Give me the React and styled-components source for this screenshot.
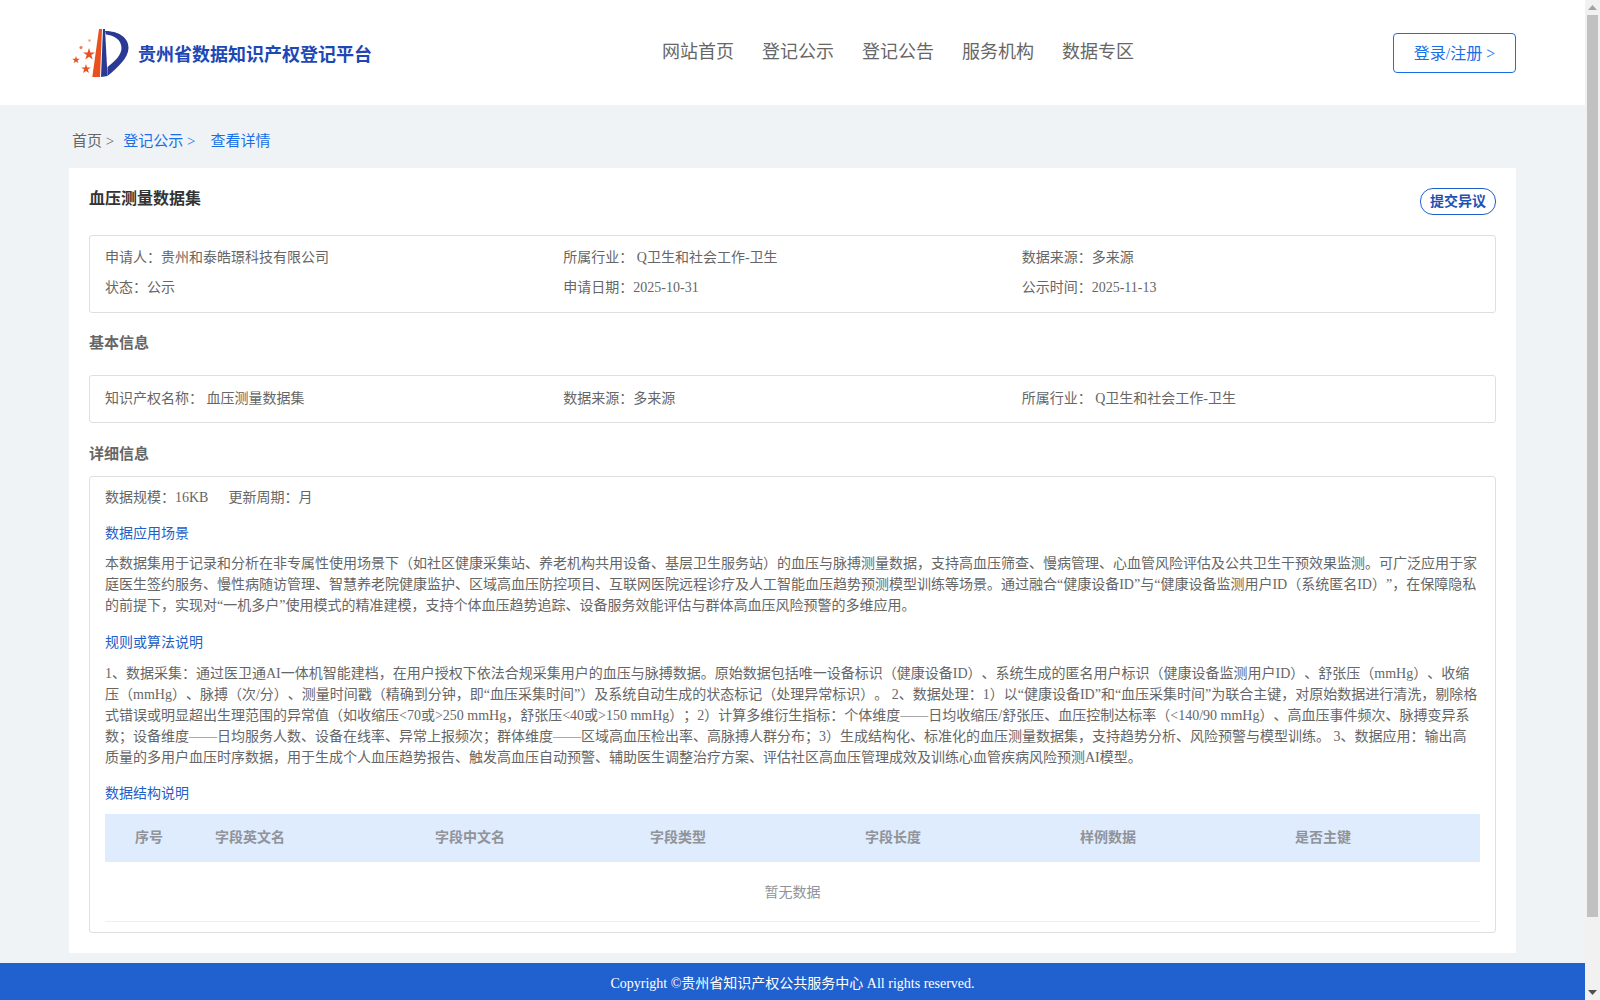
import React from "react";
import styled, { createGlobalStyle } from "styled-components";

const GlobalStyle = createGlobalStyle`
  html, body {
    margin: 0;
    padding: 0;
    height: 100%;
    overflow: hidden;
    background: #eff3f6;
    font-family: "Liberation Serif", "Noto Sans CJK SC", serif;
    font-size: 14px;
    color: #666;
    text-spacing-trim: space-all;
  }
  * { box-sizing: border-box; }
`;

// page shell + the browser scrollbar seen in the picture
const Shell = styled.div`
  display: flex;
  height: 1000px;
  overflow: hidden;
`;
const Page = styled.div`
  flex: 1;
  min-width: 0;
`;
const ScrollTrack = styled.div`
  width: 15px;
  display: flex;
  flex-direction: column;
  align-items: center;
  background: #f1f1f1;
`;
const ScrollArrow = styled.div`
  height: 15px;
  display: flex;
  align-items: center;
  justify-content: center;
  svg { display: block; }
`;
const ScrollThumb = styled.div`
  width: 11px;
  height: 902px;
  background: #c1c1c1;
`;
const ScrollRest = styled.div`
  flex: 1;
`;

// header
const Header = styled.header`
  height: 105px;
  background: #fff;
  display: grid;
  grid-template-columns: 592px auto 1fr;
  align-items: center;
  padding: 0 69px 0 70px;
`;
const Brand = styled.div`
  display: flex;
  align-items: center;
  gap: 2px;
  margin-top: 5px;
`;
const BrandName = styled.div`
  margin-bottom: 4px;
  font-size: 18px;
  font-weight: 700;
  color: #1e47b5;
  white-space: nowrap;
`;
const Nav = styled.nav`
  display: flex;
  gap: 28px;
  margin-bottom: 6px;
`;
const NavItem = styled.a`
  font-size: 18px;
  color: #666;
  white-space: nowrap;
`;
const LoginButton = styled.button`
  justify-self: end;
  width: 123px;
  height: 40px;
  margin-top: 1px;
  padding: 0 0 3px;
  background: #fff;
  border: 1px solid #1a6fe8;
  border-radius: 4px;
  color: #1a6fe8;
  font-family: inherit;
  font-size: 16px;
`;

// breadcrumb
const Breadcrumb = styled.div`
  display: flex;
  height: 63px;
  padding: 25px 70px 0 72px;
  line-height: 22px;
  font-size: 15px;
`;
const Crumb = styled.span`
  color: ${(p) => (p.$active ? "#1a6fe8" : "#666")};
  margin-right: ${(p) => p.$gap || 0}px;
`;

// main card
const Card = styled.main`
  margin: 0 69px;
  padding: 20px 20px 20px;
  background: #fff;
`;
const TitleRow = styled.div`
  display: flex;
  justify-content: space-between;
  align-items: flex-start;
  margin-bottom: 20px;
`;
const Title = styled.h1`
  margin: 0;
  font-size: 16px;
  line-height: 22px;
  font-weight: 700;
  color: #333;
`;
const ObjectionButton = styled.button`
  width: 76px;
  height: 27px;
  padding: 0 0 3px;
  background: #fff;
  border: 1px solid #1e5fcc;
  border-radius: 13px;
  color: #1c52b4;
  font-family: inherit;
  font-size: 14px;
  font-weight: 700;
`;
const SectionTitle = styled.h2`
  margin: ${(p) => p.$before}px 0 ${(p) => p.$after}px;
  font-size: 15px;
  line-height: 22px;
  font-weight: 700;
  color: #666;
`;
const Box = styled.section`
  border: 1px solid #dedfe1;
  border-radius: 3px;
  padding: ${(p) => p.$pad};
`;
const InfoGrid = styled.div`
  display: grid;
  grid-template-columns: repeat(3, 1fr);
  line-height: ${(p) => p.$line}px;
`;
const Meta = styled.div`
  display: flex;
  gap: 20px;
  line-height: 21px;
`;
const SubTitle = styled.h3`
  margin: ${(p) => p.$top || 15}px 0 0;
  font-size: 14px;
  line-height: 21px;
  font-weight: 400;
  color: #1e5fc8;
`;
const Para = styled.p`
  margin: ${(p) => p.$top}px 0 0;
  line-height: 21px;
`;

// table
const Table = styled.div`
  margin-top: 10px;
`;
const TableHead = styled.div`
  display: grid;
  grid-template-columns: 110px 220px 215px 215px 215px 215px 185px;
  height: 48px;
  padding-bottom: 4px;
  align-items: center;
  background: #dfecfd;
  color: #909399;
  font-weight: 700;
`;
const HeadCell = styled.div`
  padding-left: ${(p) => p.$indent || 0}px;
`;
const Empty = styled.div`
  height: 60px;
  padding-bottom: 2px;
  display: flex;
  align-items: center;
  justify-content: center;
  border-bottom: 1px solid #ebeef5;
  color: #909399;
`;

const Footer = styled.footer`
  margin-top: 10px;
  height: 112px;
  padding-top: 10px;
  background: #2161cf;
  color: #fff;
  text-align: center;
  line-height: 22px;
`;

const Logo = () => (
  <svg width="66" height="60" viewBox="0 0 66 60">
    <path d="M22.3 52 L29 4 L32 4 L30 52 Z" fill="#e8501e" />
    <path d="M33 4 L35 4 L37.5 51 L31 52 Z" fill="#2a3a94" />
    <path
      d="M35 6 C48 6 58.5 12 58.5 23 C58.5 33 47 43 37.5 51 L37.5 42 C45 36 51.5 30 51.5 23 C51.5 15 44 10 36 9.5 Z"
      fill="#2a3a94"
    />
    <path d="M19 23 L20.4 27.4 L25 27.4 L21.3 30.1 L22.7 34.5 L19 31.8 L15.3 34.5 L16.7 30.1 L13 27.4 L17.6 27.4 Z" fill="#e8501e" />
    <path d="M6 31 L6.9 33.7 L9.8 33.7 L7.5 35.4 L8.4 38.2 L6 36.5 L3.6 38.2 L4.5 35.4 L2.2 33.7 L5.1 33.7 Z" fill="#e8501e" />
    <path d="M16 39 L17.1 42.5 L20.8 42.5 L17.8 44.6 L19 48 L16 45.9 L13 48 L14.2 44.6 L11.2 42.5 L14.9 42.5 Z" fill="#e8501e" />
    <circle cx="11" cy="22.5" r="1.6" fill="#ee7a50" />
    <circle cx="19.5" cy="15.5" r="1.2" fill="#f0a080" />
  </svg>
);

const navItems = ["网站首页", "登记公示", "登记公告", "服务机构", "数据专区"];

const columns = [
  { label: "序号", indent: 30 },
  { label: "字段英文名" },
  { label: "字段中文名" },
  { label: "字段类型" },
  { label: "字段长度" },
  { label: "样例数据" },
  { label: "是否主键" },
];

const App = () => {
  return (
    <Shell>
      <GlobalStyle />
      <Page>
        <Header>
          <Brand>
            <Logo />
            <BrandName>贵州省数据知识产权登记平台</BrandName>
          </Brand>
          <Nav>
            {navItems.map((item) => (
              <NavItem key={item}>{item}</NavItem>
            ))}
          </Nav>
          <LoginButton type="button">登录/注册 &gt;</LoginButton>
        </Header>

        <Breadcrumb>
          <Crumb $gap={9}>首页 &gt;</Crumb>
          <Crumb $active $gap={15}>登记公示 &gt;</Crumb>
          <Crumb $active>查看详情</Crumb>
        </Breadcrumb>

        <Card>
          <TitleRow>
            <Title>血压测量数据集</Title>
            <ObjectionButton type="button">提交异议</ObjectionButton>
          </TitleRow>

          <Box $pad="7px 15px 9px">
            <InfoGrid $line={30}>
              <div>申请人：贵州和泰皓璟科技有限公司</div>
              <div>所属行业： Q卫生和社会工作-卫生</div>
              <div>数据来源：多来源</div>
              <div>状态：公示</div>
              <div>申请日期：2025-10-31</div>
              <div>公示时间：2025-11-13</div>
            </InfoGrid>
          </Box>

          <SectionTitle $before={19} $after={21}>基本信息</SectionTitle>
          <Box $pad="0 15px">
            <InfoGrid $line={46}>
              <div>知识产权名称： 血压测量数据集</div>
              <div>数据来源：多来源</div>
              <div>所属行业： Q卫生和社会工作-卫生</div>
            </InfoGrid>
          </Box>

          <SectionTitle $before={20} $after={11}>详细信息</SectionTitle>
          <Box $pad="10px 15px 10px">
            <Meta>
              <span>数据规模：16KB</span>
              <span>更新周期：月</span>
            </Meta>

            <SubTitle>数据应用场景</SubTitle>
            <Para $top={9}>
              本数据集用于记录和分析在非专属性使用场景下（如社区健康采集站、养老机构共用设备、基层卫生服务站）的血压与脉搏测量数据，支持高血压筛查、慢病管理、心血管风险评估及公共卫生干预效果监测。可广泛应用于家庭医生签约服务、慢性病随访管理、智慧养老院健康监护、区域高血压防控项目、互联网医院远程诊疗及人工智能血压趋势预测模型训练等场景。通过融合“健康设备ID”与“健康设备监测用户ID（系统匿名ID）”，在保障隐私的前提下，实现对“一机多户”使用模式的精准建模，支持个体血压趋势追踪、设备服务效能评估与群体高血压风险预警的多维应用。
            </Para>

            <SubTitle $top={16}>规则或算法说明</SubTitle>
            <Para $top={10}>
              1、数据采集：通过医卫通AI一体机智能建档，在用户授权下依法合规采集用户的血压与脉搏数据。原始数据包括唯一设备标识（健康设备ID）、系统生成的匿名用户标识（健康设备监测用户ID）、舒张压（mmHg）、收缩压（mmHg）、脉搏（次/分）、测量时间戳（精确到分钟，即“血压采集时间”）及系统自动生成的状态标记（处理异常标识）。 2、数据处理：1）以“健康设备ID”和“血压采集时间”为联合主键，对原始数据进行清洗，剔除格式错误或明显超出生理范围的异常值（如收缩压&lt;70或&gt;250 mmHg，舒张压&lt;40或&gt;150 mmHg）；2）计算多维衍生指标：个体维度——日均收缩压/舒张压、血压控制达标率（&lt;140/90 mmHg）、高血压事件频次、脉搏变异系数；设备维度——日均服务人数、设备在线率、异常上报频次；群体维度——区域高血压检出率、高脉搏人群分布；3）生成结构化、标准化的血压测量数据集，支持趋势分析、风险预警与模型训练。 3、数据应用：输出高质量的多用户血压时序数据，用于生成个人血压趋势报告、触发高血压自动预警、辅助医生调整治疗方案、评估社区高血压管理成效及训练心血管疾病风险预测AI模型。
            </Para>

            <SubTitle>数据结构说明</SubTitle>
            <Table>
              <TableHead>
                {columns.map((col) => (
                  <HeadCell key={col.label} $indent={col.indent}>{col.label}</HeadCell>
                ))}
              </TableHead>
              <Empty>暂无数据</Empty>
            </Table>
          </Box>
        </Card>

        <Footer>Copyright ©贵州省知识产权公共服务中心 All rights reserved.</Footer>
      </Page>

      <ScrollTrack>
        <ScrollArrow>
          <svg width="9" height="5" viewBox="0 0 9 5"><path d="M4.5 0 L9 5 L0 5 Z" fill="#a3a3a3" /></svg>
        </ScrollArrow>
        <ScrollThumb />
        <ScrollRest />
        <ScrollArrow>
          <svg width="9" height="5" viewBox="0 0 9 5"><path d="M0 0 L9 0 L4.5 5 Z" fill="#505050" /></svg>
        </ScrollArrow>
      </ScrollTrack>
    </Shell>
  );
};
export default App;
